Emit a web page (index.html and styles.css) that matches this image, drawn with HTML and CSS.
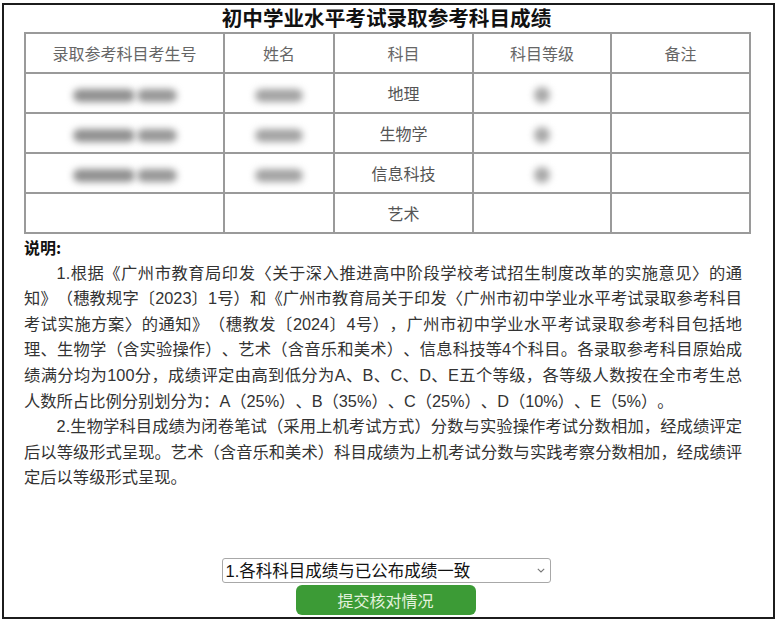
FILE: index.html
```html
<!DOCTYPE html>
<html lang="zh-CN">
<head>
<meta charset="utf-8">
<title>初中学业水平考试录取参考科目成绩</title>
<link rel="stylesheet" href="styles.css">
</head>
<body>
<div class="page">
  <h1 class="title">初中学业水平考试录取参考科目成绩</h1>
  <table class="grades">
    <colgroup>
      <col class="c-id"><col class="c-name"><col class="c-subj"><col class="c-grade"><col class="c-note">
    </colgroup>
    <thead>
      <tr><th>录取参考科目考生号</th><th>姓名</th><th>科目</th><th>科目等级</th><th>备注</th></tr>
    </thead>
    <tbody>
      <tr><td><span class="blur blur-id"></span><span class="blur blur-id2"></span></td><td><span class="blur blur-name"></span></td><td>地理</td><td><span class="blur blur-grade"></span></td><td></td></tr>
      <tr><td><span class="blur blur-id"></span><span class="blur blur-id2"></span></td><td><span class="blur blur-name"></span></td><td>生物学</td><td><span class="blur blur-grade"></span></td><td></td></tr>
      <tr><td><span class="blur blur-id"></span><span class="blur blur-id2"></span></td><td><span class="blur blur-name"></span></td><td>信息科技</td><td><span class="blur blur-grade"></span></td><td></td></tr>
      <tr><td></td><td></td><td>艺术</td><td></td><td></td></tr>
    </tbody>
  </table>
  <div class="notes">
    <div class="notes-title">说明:</div>
    <p>1.根据《广州市教育局印发〈关于深入推进高中阶段学校考试招生制度改革的实施意见〉的通知》（穗教规字〔2023〕1号）和《广州市教育局关于印发〈广州市初中学业水平考试录取参考科目考试实施方案〉的通知》（穗教发〔2024〕4号），广州市初中学业水平考试录取参考科目包括地理、生物学（含实验操作）、艺术（含音乐和美术）、信息科技等4个科目。各录取参考科目原始成绩满分均为100分，成绩评定由高到低分为A、B、C、D、E五个等级，各等级人数按在全市考生总人数所占比例分别划分为：A（25%）、B（35%）、C（25%）、D（10%）、E（5%）。</p>
    <p>2.生物学科目成绩为闭卷笔试（采用上机考试方式）分数与实验操作考试分数相加，经成绩评定后以等级形式呈现。艺术（含音乐和美术）科目成绩为上机考试分数与实践考察分数相加，经成绩评定后以等级形式呈现。</p>
  </div>
  <form class="check">
    <div class="select-wrap">
      <select class="choice">
        <option>1.各科科目成绩与已公布成绩一致</option>
        <option>2.成绩与已公布成绩不一致</option>
      </select>
      <svg class="chev" width="8" height="5" viewBox="0 0 8 5"><path d="M0.8 0.8 L4 4 L7.2 0.8" fill="none" stroke="#777" stroke-width="1.1"/></svg>
    </div>
    <button type="button" class="submit">提交核对情况</button>
  </form>
</div>
</body>
</html>
```
FILE: styles.css
```css
html, body {
  margin: 0;
  padding: 0;
  background: #fff;
}

.page {
  margin: 3px 2px 0;
  width: 773px;
  height: 616px;
  box-sizing: border-box;
  border: 2px solid #1c1c1c;
  padding: 0 24px 0 20px;
  display: flex;
  flex-direction: column;
}

.title {
  margin: 0 0 3px;
  font: bold 20.6px/24px "Noto Sans CJK SC", sans-serif;
  color: #111;
  text-align: center;
}

.grades {
  border-collapse: collapse;
  table-layout: fixed;
  width: 725px;
  font: 16px/20px "Noto Sans CJK SC", sans-serif;
}

.c-id { width: 199px; }
.c-name { width: 110px; }
.c-subj { width: 139px; }
.c-grade { width: 138px; }
.c-note { width: 139px; }

.grades th,
.grades td {
  border: 2px solid #9a9a9a;
  height: 38px;
  padding: 0;
  text-align: center;
  vertical-align: middle;
}

.grades th {
  font-weight: normal;
  color: #666;
}

.grades td {
  color: #555;
}

.blur {
  display: inline-block;
  vertical-align: middle;
  height: 13px;
  background: #8f8f8f;
  border-radius: 7px;
  filter: blur(3.5px);
}

.blur-id { width: 62px; }
.blur-id2 { width: 40px; margin-left: 2px; background: #979797; }
.blur-name { width: 48px; background: #a3a3a3; }
.blur-grade { width: 16px; height: 16px; border-radius: 8px; background: #a8a8a8; }

.notes {
  margin-top: 1px;
}

.notes-title {
  font: bold 16px/25.6px "Noto Sans CJK SC", sans-serif;
  color: #111;
}

.notes p {
  margin: 0;
  width: 718px;
  text-indent: 2em;
  font-family: "Liberation Sans", "Noto Sans CJK SC", sans-serif;
  font-size: 16.3px;
  line-height: 25.6px;
  color: #333;
  text-align: justify;
  text-spacing-trim: space-all;
  text-autospace: no-autospace;
}

.check {
  margin: auto 0 0;
  padding-bottom: 2px;
  display: flex;
  flex-direction: column;
  align-items: center;
  gap: 2px;
}

.select-wrap {
  position: relative;
  width: 329px;
  height: 25px;
  margin-left: -1px;
}

.choice {
  appearance: none;
  -webkit-appearance: none;
  width: 100%;
  height: 100%;
  box-sizing: border-box;
  border: 1px solid #a8a8a8;
  border-radius: 3px;
  background: #fff;
  padding: 0 20px 0 3px;
  font: 16.5px "Liberation Sans", "Noto Sans CJK SC", sans-serif;
  color: #111;
}

.chev {
  position: absolute;
  right: 6px;
  top: 10px;
  pointer-events: none;
}

.submit {
  width: 180px;
  height: 30px;
  border: none;
  border-radius: 6px;
  background: #3c9b36;
  color: #e2f2dc;
  font: 16px "Noto Sans CJK SC", sans-serif;
  padding: 0;
  margin-left: -2px;
}
```
